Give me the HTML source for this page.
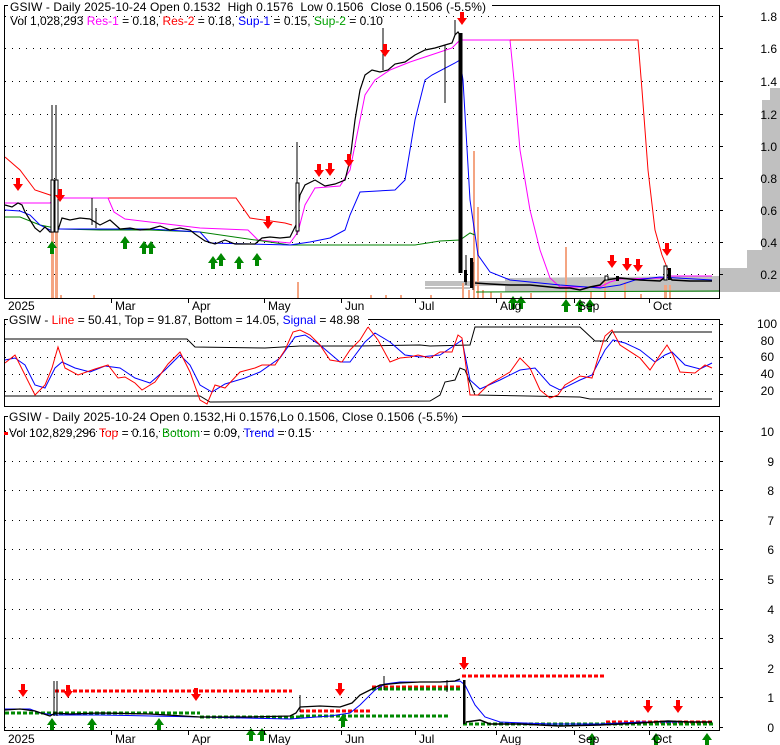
<!DOCTYPE html>
<html><head><meta charset="utf-8"><style>
html,body{margin:0;padding:0;background:#fff;}
svg{display:block;font-family:"Liberation Sans",Arial,sans-serif;}
</style></head><body>
<svg width="780" height="745" viewBox="0 0 780 745" xmlns="http://www.w3.org/2000/svg">
<defs>
<polygon id="dn" points="-2,-7 2,-7 2,-1 5,-1 0,6 -5,-1 -2,-1" fill="#ff0000"/>
<polygon id="up" points="-2,7 2,7 2,1 5,1 0,-6 -5,1 -2,1" fill="#008800"/>
</defs>
<rect width="780" height="745" fill="#fff"/>

<!-- ===== TOP PANEL ===== -->
<g stroke="#000" stroke-dasharray="1,6" stroke-width="1">
<line x1="5" y1="16.5" x2="719" y2="16.5"/><line x1="5" y1="48.5" x2="719" y2="48.5"/>
<line x1="5" y1="81.5" x2="719" y2="81.5"/><line x1="5" y1="114.5" x2="719" y2="114.5"/>
<line x1="5" y1="146.5" x2="719" y2="146.5"/><line x1="5" y1="178.5" x2="719" y2="178.5"/>
<line x1="5" y1="210.5" x2="719" y2="210.5"/><line x1="5" y1="242.5" x2="719" y2="242.5"/>
<line x1="5" y1="274.5" x2="719" y2="274.5"/>
</g>
<polygon points="762,100 780,100 780,250 762,250" fill="#c0c0c0"/>
<polygon points="770,88 780,88 780,102 770,102" fill="#c0c0c0"/>
<polygon points="747,250 780,250 780,292 747,292" fill="#c0c0c0"/>
<polygon points="720,268 780,268 780,292 720,292" fill="#c0c0c0"/>
<polygon points="505,278 719,276 719,292 505,292" fill="#c0c0c0"/>
<polygon points="425,281 505,281 505,286 425,286" fill="#c0c0c0"/>
<line x1="425" y1="288" x2="470" y2="288" stroke="#c0c0c0" stroke-width="2"/>
<g fill="#f4a582">
<rect x="51" y="230" width="3" height="68"/><rect x="55" y="230" width="3" height="68"/>
<rect x="297" y="282" width="2" height="16"/><rect x="473" y="151" width="2" height="147"/>
<rect x="477" y="207" width="2" height="91"/><rect x="565" y="247" width="2" height="51"/>
<rect x="604" y="280" width="2" height="18"/><rect x="624" y="282" width="2" height="16"/>
<rect x="664" y="285" width="3" height="13"/><rect x="669" y="285" width="2" height="13"/>
<rect x="60" y="295" width="2" height="3"/><rect x="93" y="295" width="2" height="3"/>
<rect x="370" y="295" width="2" height="3"/><rect x="385" y="295" width="2" height="3"/>
<rect x="400" y="295" width="2" height="3"/><rect x="430" y="295" width="2" height="3"/>
<rect x="462" y="283" width="2" height="15"/><rect x="468" y="290" width="2" height="8"/>
<rect x="482" y="290" width="2" height="8"/><rect x="490" y="292" width="2" height="6"/>
<rect x="500" y="293" width="2" height="5"/><rect x="530" y="293" width="2" height="5"/>
<rect x="590" y="292" width="2" height="6"/><rect x="640" y="294" width="2" height="4"/>
</g>
<polyline fill="none" stroke="#ff0000" points="5,157 20,170 35,190 50,195 55,198 236,198 250,218 285,223 292,225"/>
<polyline fill="none" stroke="#ff00ff" points="5,203 50,203 55,198 108,198 114,212 125,219 200,228 248,230 258,240 290,243 298,232 305,205 315,188 340,186 350,170 358,130 365,95 375,80 390,70 410,62 440,52 452,48 460,40 510,40 514,80 520,150 530,210 540,250 550,278 560,287 600,287 610,282 620,279 665,278 670,276 712,276"/>
<polyline fill="none" stroke="#ff0000" points="510,40 638,40 642,90 648,170 655,230 662,255 668,270"/>
<polyline fill="none" stroke="#008000" points="5,217 20,217 40,225 60,229 100,230 150,230 200,232 290,245 415,245 440,241 460,240 470,233 475,235"/>
<polyline fill="none" stroke="#008000" points="476,292 719,291"/>
<polyline fill="none" stroke="#0000ff" points="5,210 20,211 30,215 40,225 50,230 60,229 100,229 150,229 200,232 210,243 290,245 310,242 330,238 345,230 350,215 360,192 395,190 405,180 415,120 425,80 432,75 455,63 460,60 463,80 470,200 478,255 490,272 510,280 560,285 600,288 620,285 635,280 660,277 712,280"/>
<polyline fill="none" stroke="#000" stroke-width="1.2" points="5,205 12,207 18,203 22,205 25,212 30,220 35,228 40,232 45,227 50,232 52,232 58,230 62,218 70,220 80,218 90,219 100,225 110,220 120,229 130,228 140,230 150,229 160,226 170,230 180,228 190,230 195,234 205,241 215,244 225,240 235,244 245,244 255,244 262,238 270,237 280,238 290,237 296,225 300,195 305,185 315,180 325,186 335,184 345,180 350,160 355,120 360,90 365,75 372,70 380,72 388,70 395,64 405,62 415,55 425,50 435,48 445,45 452,43 455,35 458,32 460,35"/>
<g stroke="#000" stroke-width="1">
<line x1="52" y1="105" x2="52" y2="232"/><line x1="56" y1="105" x2="56" y2="232"/>
<rect x="51" y="180" width="3" height="52" fill="#fff"/><rect x="55" y="180" width="3" height="52" fill="#fff"/>
<line x1="297" y1="142" x2="297" y2="235"/><rect x="296" y="183" width="3" height="48" fill="#fff"/>
<line x1="383" y1="28" x2="383" y2="70"/><line x1="445" y1="45" x2="445" y2="103"/>
<line x1="455" y1="20" x2="455" y2="35"/>
<line x1="92" y1="198" x2="92" y2="225"/><line x1="96" y1="208" x2="96" y2="228"/>
<line x1="466" y1="255" x2="466" y2="285"/><line x1="473" y1="262" x2="473" y2="290"/>
</g>
<rect x="458.5" y="33" width="4" height="240" fill="#000"/>
<rect x="464" y="270" width="3" height="12" fill="#000"/>
<rect x="470" y="258" width="3" height="30" fill="#000"/>
<polyline fill="none" stroke="#000" stroke-width="1.5" points="475,283 490,284 510,285 530,285 550,287 560,288 570,288 580,290 590,287 600,285 605,280 620,278 640,280 660,281 668,275 672,280 690,281 712,281"/>
<rect x="664" y="266" width="3" height="14" fill="#fff" stroke="#000"/>
<rect x="668" y="268" width="3" height="12" fill="#000"/>
<rect x="616" y="276" width="3" height="5" fill="#000"/>
<rect x="605" y="276" width="3" height="4" fill="#fff" stroke="#000"/>
<use href="#dn" x="18" y="185"/><use href="#dn" x="60" y="196"/><use href="#dn" x="268" y="223"/>
<use href="#dn" x="319" y="171"/><use href="#dn" x="330" y="170"/><use href="#dn" x="349" y="161"/>
<use href="#dn" x="385" y="51"/><use href="#dn" x="462" y="19"/><use href="#dn" x="612" y="262"/>
<use href="#dn" x="627" y="265"/><use href="#dn" x="638" y="266"/><use href="#dn" x="667" y="250"/>
<use href="#up" x="52" y="247"/><use href="#up" x="125" y="242"/><use href="#up" x="144" y="247"/>
<use href="#up" x="151" y="247"/><use href="#up" x="213" y="262"/><use href="#up" x="221" y="259"/>
<use href="#up" x="239" y="262"/><use href="#up" x="257" y="259"/><use href="#up" x="513" y="302"/>
<use href="#up" x="521" y="302"/><use href="#up" x="566" y="305"/><use href="#up" x="580" y="305"/><use href="#up" x="590" y="305"/>
<polyline fill="none" stroke="#000" points="8,5.5 4.5,5.5 4.5,298.5 719.5,298.5 719.5,5.5 492,5.5"/>
<g stroke="#000"><line x1="719" y1="16.5" x2="723" y2="16.5"/><line x1="719" y1="48.5" x2="723" y2="48.5"/><line x1="719" y1="81.5" x2="723" y2="81.5"/><line x1="719" y1="114.5" x2="723" y2="114.5"/><line x1="719" y1="146.5" x2="723" y2="146.5"/><line x1="719" y1="178.5" x2="723" y2="178.5"/><line x1="719" y1="210.5" x2="723" y2="210.5"/><line x1="719" y1="242.5" x2="723" y2="242.5"/><line x1="719" y1="274.5" x2="723" y2="274.5"/>
<line x1="111.5" y1="298" x2="111.5" y2="303"/><line x1="188.5" y1="298" x2="188.5" y2="303"/><line x1="264.5" y1="298" x2="264.5" y2="303"/><line x1="341.5" y1="298" x2="341.5" y2="303"/><line x1="415.5" y1="298" x2="415.5" y2="303"/><line x1="496.5" y1="298" x2="496.5" y2="303"/><line x1="574.5" y1="298" x2="574.5" y2="303"/><line x1="649.5" y1="298" x2="649.5" y2="303"/></g>
<g font-size="12" fill="#000">
<text x="10" y="11" style="white-space:pre" textLength="476">GSIW - Daily 2025-10-24 Open 0.1532  High 0.1576  Low 0.1506  Close 0.1506 (-5.5%)</text>
<text x="10" y="25">Vol 1,028,293 <tspan fill="#ff00ff">Res-1</tspan> = 0.18, <tspan fill="#ff0000">Res-2</tspan> = 0.18, <tspan fill="#0000ff">Sup-1</tspan> = 0.15, <tspan fill="#00a000">Sup-2</tspan> = 0.10</text>
</g>
<g font-size="12" fill="#000" text-anchor="end">
<text x="777" y="21">1.8</text><text x="777" y="53">1.6</text><text x="777" y="86">1.4</text><text x="777" y="119">1.2</text><text x="777" y="151">1.0</text><text x="777" y="183">0.8</text><text x="777" y="215">0.6</text><text x="777" y="247">0.4</text><text x="777" y="279">0.2</text>
</g>
<g font-size="12" fill="#000">
<text x="8" y="310">2025</text><text x="115" y="310">Mar</text><text x="192" y="310">Apr</text><text x="268" y="310">May</text><text x="345" y="310">Jun</text><text x="419" y="310">Jul</text><text x="500" y="310">Aug</text><text x="578" y="310">Sep</text><text x="653" y="310">Oct</text>
</g>

<!-- ===== MIDDLE PANEL ===== -->
<g stroke="#000" stroke-dasharray="1,6">
<line x1="5" y1="324.5" x2="719" y2="324.5"/><line x1="5" y1="341.5" x2="719" y2="341.5"/><line x1="5" y1="357.5" x2="719" y2="357.5"/><line x1="5" y1="374.5" x2="719" y2="374.5"/><line x1="5" y1="391.5" x2="719" y2="391.5"/>
</g>
<polyline fill="none" stroke="#000" points="5,339 187,339 195,347 265,348 300,346 360,346 420,345 430,346 470,345 475,327 580,327 595,341 606,341 612,332 712,332"/>
<polyline fill="none" stroke="#000" points="5,396 200,396 210,402 430,401 440,395 445,382 455,380 460,368 465,370 475,395 580,397 590,399 712,399"/>
<polyline fill="none" stroke="#0000ff" points="5,360 15,358 25,365 35,385 45,388 55,368 62,362 75,368 90,372 105,366 120,368 135,378 150,383 165,370 180,355 190,365 200,385 212,392 225,384 245,378 260,372 280,358 295,337 305,335 320,345 340,362 350,362 365,342 375,333 390,342 405,355 420,357 440,355 455,345 462,340 470,380 480,389 500,380 520,370 535,368 550,385 560,390 580,380 592,375 605,350 613,340 625,343 640,350 655,362 665,355 672,352 685,365 700,369 712,363"/>
<polyline fill="none" stroke="#ff0000" points="5,363 15,355 25,375 35,395 45,385 52,368 58,347 65,368 78,375 95,369 108,365 118,378 125,377 135,383 142,390 155,382 168,364 180,352 190,372 200,400 207,404 215,385 225,388 240,372 255,368 262,365 275,365 285,350 293,332 300,330 310,335 320,345 330,360 342,362 350,350 360,340 368,327 378,340 390,362 400,358 410,357 418,355 430,358 440,352 452,352 458,335 462,338 470,395 478,395 488,385 500,378 510,372 520,358 530,368 540,390 550,398 558,395 565,385 580,376 592,378 598,358 605,336 612,330 620,345 640,358 650,370 660,355 667,345 673,355 680,372 695,373 705,365 712,368"/>
<rect x="4.5" y="319.5" width="715" height="87" fill="none" stroke="#000"/>
<rect x="6" y="313" width="362" height="14" fill="#fff"/>
<g stroke="#000"><line x1="719" y1="324.5" x2="723" y2="324.5"/><line x1="719" y1="341.5" x2="723" y2="341.5"/><line x1="719" y1="357.5" x2="723" y2="357.5"/><line x1="719" y1="374.5" x2="723" y2="374.5"/><line x1="719" y1="391.5" x2="723" y2="391.5"/><line x1="4" y1="319.5" x2="8" y2="319.5"/></g>
<text x="9" y="324" font-size="12" fill="#000">GSIW - <tspan fill="#ff0000">Line</tspan> = 50.41, Top = 91.87, Bottom = 14.05, <tspan fill="#0000ff">Signal</tspan> = 48.98</text>
<g font-size="12" fill="#000" text-anchor="end">
<text x="777" y="328">100</text><text x="774" y="345">80</text><text x="774" y="361">60</text><text x="774" y="378">40</text><text x="774" y="395">20</text>
</g>

<!-- ===== LOWER PANEL ===== -->
<g stroke="#000" stroke-dasharray="1,6">
<line x1="5" y1="431.5" x2="719" y2="431.5"/><line x1="5" y1="461.5" x2="719" y2="461.5"/><line x1="5" y1="490.5" x2="719" y2="490.5"/><line x1="5" y1="520.5" x2="719" y2="520.5"/><line x1="5" y1="549.5" x2="719" y2="549.5"/><line x1="5" y1="579.5" x2="719" y2="579.5"/><line x1="5" y1="609.5" x2="719" y2="609.5"/><line x1="5" y1="638.5" x2="719" y2="638.5"/><line x1="5" y1="668.5" x2="719" y2="668.5"/><line x1="5" y1="697.5" x2="719" y2="697.5"/><line x1="5" y1="727.5" x2="719" y2="727.5"/>
</g>
<g stroke-width="3" stroke-dasharray="4,2" fill="none">
<line x1="55" y1="691" x2="292" y2="691" stroke="#ff0000"/>
<line x1="300" y1="711" x2="370" y2="711" stroke="#ff0000"/>
<line x1="372" y1="687" x2="460" y2="687" stroke="#ff0000"/>
<line x1="462" y1="676" x2="604" y2="676" stroke="#ff0000"/>
<line x1="606" y1="722" x2="714" y2="722" stroke="#ff0000"/>
<line x1="5" y1="713" x2="200" y2="713" stroke="#008800"/>
<line x1="200" y1="717" x2="300" y2="717" stroke="#008800"/>
<line x1="300" y1="716" x2="448" y2="716" stroke="#008800"/>
<line x1="372" y1="689" x2="460" y2="689" stroke="#008800"/>
<line x1="463" y1="724" x2="714" y2="724" stroke="#008800"/>
</g>
<polyline fill="none" stroke="#0000ff" points="5,709 30,709 40,713 55,715 100,715 200,717 290,719 330,716 350,713 360,705 375,690 385,684 400,682 440,682 460,681 465,685 475,705 485,717 500,722 550,724 600,724 640,722 712,722"/>
<polyline fill="none" stroke="#000" stroke-width="1.3" points="5,710 20,709 35,711 50,716 55,713 70,714 100,713 150,714 200,717 250,717 290,716 296,713 300,707 320,706 340,707 352,703 360,695 370,690 380,685 400,683 420,682 440,682 455,681 460,679"/>
<line x1="54" y1="681" x2="54" y2="716" stroke="#000"/><line x1="57" y1="681" x2="57" y2="716" stroke="#000"/>
<line x1="300" y1="695" x2="300" y2="712" stroke="#000"/>
<line x1="384" y1="676" x2="384" y2="690" stroke="#000"/><line x1="447" y1="680" x2="447" y2="692" stroke="#000"/>
<rect x="463" y="680" width="2.5" height="44" fill="#000"/>
<polyline fill="none" stroke="#000" stroke-width="1.5" points="466,722 480,720 490,724 520,724 560,726 600,725 640,723 668,721 690,722 712,722"/>
<use href="#dn" x="23" y="691"/><use href="#dn" x="68" y="692"/><use href="#dn" x="196" y="695"/>
<use href="#dn" x="340" y="690"/><use href="#dn" x="464" y="664"/><use href="#dn" x="648" y="707"/><use href="#dn" x="678" y="707"/>
<use href="#up" x="52" y="724"/><use href="#up" x="92" y="724"/><use href="#up" x="159" y="724"/>
<use href="#up" x="251" y="734"/><use href="#up" x="262" y="734"/><use href="#up" x="343" y="720"/>
<use href="#up" x="592" y="739"/><use href="#up" x="656" y="739"/><use href="#up" x="707" y="739"/>
<rect x="4.5" y="416.5" width="715" height="314" fill="none" stroke="#000"/>
<rect x="6" y="410" width="456" height="14" fill="#fff"/>
<g stroke="#000"><line x1="4" y1="416.5" x2="8" y2="416.5"/>
<line x1="719" y1="431.5" x2="723" y2="431.5"/><line x1="719" y1="461.5" x2="723" y2="461.5"/><line x1="719" y1="490.5" x2="723" y2="490.5"/><line x1="719" y1="520.5" x2="723" y2="520.5"/><line x1="719" y1="549.5" x2="723" y2="549.5"/><line x1="719" y1="579.5" x2="723" y2="579.5"/><line x1="719" y1="609.5" x2="723" y2="609.5"/><line x1="719" y1="638.5" x2="723" y2="638.5"/><line x1="719" y1="668.5" x2="723" y2="668.5"/><line x1="719" y1="697.5" x2="723" y2="697.5"/><line x1="719" y1="727.5" x2="723" y2="727.5"/>
<line x1="111.5" y1="730" x2="111.5" y2="735"/><line x1="188.5" y1="730" x2="188.5" y2="735"/><line x1="264.5" y1="730" x2="264.5" y2="735"/><line x1="341.5" y1="730" x2="341.5" y2="735"/><line x1="415.5" y1="730" x2="415.5" y2="735"/><line x1="496.5" y1="730" x2="496.5" y2="735"/><line x1="574.5" y1="730" x2="574.5" y2="735"/><line x1="649.5" y1="730" x2="649.5" y2="735"/></g>
<g font-size="12" fill="#000">
<text x="9" y="421" textLength="449">GSIW - Daily 2025-10-24 Open 0.1532,Hi 0.1576,Lo 0.1506, Close 0.1506 (-5.5%)</text>
<rect x="4" y="432" width="4" height="3" fill="#ff0000"/>
<text x="9" y="437">Vol 102,829,296 <tspan fill="#ff0000">Top</tspan> = 0.16, <tspan fill="#00a000">Bottom</tspan> = 0.09, <tspan fill="#0000ff">Trend</tspan> = 0.15</text>
</g>
<g font-size="12" fill="#000" text-anchor="end">
<text x="774" y="436">10</text><text x="774" y="466">9</text><text x="774" y="495">8</text><text x="774" y="525">7</text><text x="774" y="554">6</text><text x="774" y="584">5</text><text x="774" y="614">4</text><text x="774" y="643">3</text><text x="774" y="673">2</text><text x="774" y="702">1</text><text x="774" y="732">0</text>
</g>
<g font-size="12" fill="#000">
<text x="8" y="743">2025</text><text x="115" y="743">Mar</text><text x="192" y="743">Apr</text><text x="268" y="743">May</text><text x="345" y="743">Jun</text><text x="419" y="743">Jul</text><text x="500" y="743">Aug</text><text x="578" y="743">Sep</text><text x="653" y="743">Oct</text>
</g>
</svg>
</body></html>
